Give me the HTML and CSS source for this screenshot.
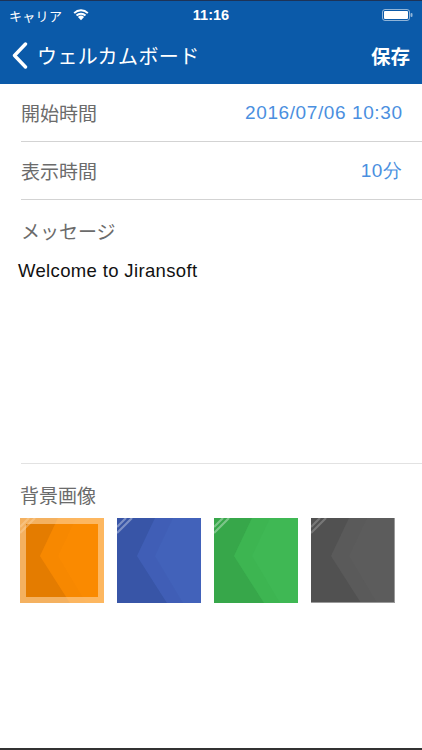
FILE: index.html
```html
<!DOCTYPE html>
<html lang="ja">
<head>
<meta charset="utf-8">
<title>ウェルカムボード</title>
<link rel="stylesheet" href="styles.css">
</head>
<body>
<div class="screen">
  <header class="topbar">
    <div class="status">
      <div class="status-left">
        <span class="carrier">キャリア</span>
        <svg class="wifi" width="18" height="13" viewBox="0 0 17 12">
          <path d="M8.5 11.5 L5.6 8.4 A4.2 4.2 0 0 1 11.4 8.4 Z" fill="#fff"/>
          <path d="M3.6 6.3 A7 7 0 0 1 13.4 6.3 L12.1 7.7 A5.2 5.2 0 0 0 4.9 7.7 Z" fill="#fff"/>
          <path d="M1.4 4 A10.2 10.2 0 0 1 15.6 4 L14.3 5.4 A8.3 8.3 0 0 0 2.7 5.4 Z" fill="#fff"/>
        </svg>
      </div>
      <div class="clock">11:16</div>
      <div class="status-right">
        <svg class="battery" width="32" height="12" viewBox="0 0 32 12">
          <rect x="0.5" y="0.5" width="27" height="11" rx="2.5" fill="none" stroke="#fff" stroke-opacity="0.55"/>
          <rect x="2" y="2" width="24" height="8" rx="1" fill="#fff"/>
          <rect x="28.5" y="4" width="2" height="4" rx="1" fill="#fff" fill-opacity="0.55"/>
        </svg>
      </div>
    </div>
    <nav class="navbar">
      <div class="back">
        <svg class="chevron" width="16" height="27" viewBox="0 0 16 27">
          <path d="M13.5 2 L2.5 13.5 L13.5 25" fill="none" stroke="#fff" stroke-width="3.4" stroke-linecap="round" stroke-linejoin="round"/>
        </svg>
        <span class="nav-title">ウェルカムボード</span>
      </div>
      <span class="save">保存</span>
    </nav>
  </header>

  <main class="content">
    <div class="row">
      <span class="label">開始時間</span>
      <span class="value">2016/07/06 10:30</span>
    </div>
    <div class="row">
      <span class="label">表示時間</span>
      <span class="value">10分</span>
    </div>
    <section class="message">
      <div class="label">メッセージ</div>
      <div class="message-text">Welcome to Jiransoft</div>
    </section>
    <section class="bg">
      <div class="label">背景画像</div>
      <div class="tiles">
        <div class="tile selected">
          <svg viewBox="0 0 84 85" preserveAspectRatio="none">
            <rect width="84" height="85" fill="#fa8a00"/>
            <polygon points="0,0 38,0 20,38 50,85 0,85" fill="#e47c00"/>
            <polygon points="38,0 56,0 38,38 66,85 50,85 20,38" fill="#f28500" opacity="0.35"/>
            <path d="M0 9 L9 0 M0 15 L15 0" stroke="#fff" stroke-opacity="0.3" stroke-width="2.2"/>
          </svg>
        </div>
        <div class="tile">
          <svg viewBox="0 0 84 85" preserveAspectRatio="none">
            <rect width="84" height="85" fill="#4262ba"/>
            <polygon points="0,0 38,0 20,38 50,85 0,85" fill="#3855a7"/>
            <polygon points="38,0 56,0 38,38 66,85 50,85 20,38" fill="#3c5ab0" opacity="0.35"/>
            <path d="M0 9 L9 0 M0 15 L15 0" stroke="#fff" stroke-opacity="0.35" stroke-width="2.2"/>
          </svg>
        </div>
        <div class="tile">
          <svg viewBox="0 0 84 85" preserveAspectRatio="none">
            <rect width="84" height="85" fill="#3fb854"/>
            <polygon points="0,0 38,0 20,38 50,85 0,85" fill="#37a74a"/>
            <polygon points="38,0 56,0 38,38 66,85 50,85 20,38" fill="#3aaf4e" opacity="0.35"/>
            <path d="M0 9 L9 0 M0 15 L15 0" stroke="#fff" stroke-opacity="0.35" stroke-width="2.2"/>
          </svg>
        </div>
        <div class="tile gray">
          <svg viewBox="0 0 84 85" preserveAspectRatio="none">
            <rect width="84" height="85" fill="#5c5c5c"/>
            <polygon points="0,0 38,0 20,38 50,85 0,85" fill="#515151"/>
            <polygon points="38,0 56,0 38,38 66,85 50,85 20,38" fill="#575757" opacity="0.35"/>
            <path d="M0 9 L9 0 M0 15 L15 0" stroke="#fff" stroke-opacity="0.22" stroke-width="2.2"/>
          </svg>
        </div>
      </div>
    </section>
  </main>
</div>
</body>
</html>
```

FILE: styles.css
```css
* { box-sizing: border-box; }
html, body { margin: 0; padding: 0; background: #fff; }
body {
  font-family: "Noto Sans CJK JP", "Liberation Sans", sans-serif;
}
.screen {
  width: 422px;
  height: 750px;
  display: flex;
  flex-direction: column;
  border-bottom: 2px solid #333;
  overflow: hidden;
}
.topbar {
  background: #0b5aa9;
  border-top: 1px solid #1d3358;
  color: #fff;
}
.status {
  height: 28px;
  display: grid;
  grid-template-columns: 1fr auto 1fr;
  align-items: center;
  padding: 0 9px;
}
.status-left { display: flex; align-items: center; gap: 10px; }
.carrier { font-size: 13px; line-height: 1; letter-spacing: 0.3px; }
.wifi { display: block; margin-top: -1px; }
.clock {
  font-family: "Liberation Sans", sans-serif;
  font-weight: bold;
  font-size: 14.5px;
}
.status-right { display: flex; justify-content: flex-end; }
.battery { display: block; margin-right: -1px; }
.navbar {
  height: 55px;
  display: flex;
  align-items: center;
  justify-content: space-between;
  padding: 0 12px 2px 12px;
}
.back { display: flex; align-items: center; gap: 9px; }
.chevron { display: block; }
.nav-title { font-size: 20px; letter-spacing: 0.4px; }
.save { font-size: 19.5px; font-weight: bold; }

.content { flex: 1; display: flex; flex-direction: column; }
.row {
  height: 58px;
  margin-left: 21px;
  padding-right: 20px;
  border-bottom: 1px solid #d3d3d3;
  display: flex;
  align-items: center;
  justify-content: space-between;
}
.label {
  font-size: 19px;
  color: #6b6b6b;
  line-height: 1;
}
.value {
  font-family: "Liberation Sans", sans-serif;
  font-size: 19px;
  color: #4a8fe0;
  letter-spacing: 0.6px;
  margin-right: -0.6px;
}
.message {
  height: 264px;
  margin-left: 21px;
  border-bottom: 1px solid #e2e2e2;
  padding-top: 21px;
}
.message-text {
  margin-left: -3px;
  margin-top: 20px;
  font-family: "Liberation Sans", sans-serif;
  font-size: 18.5px;
  color: #111;
  letter-spacing: 0.35px;
}
.bg { padding: 21px 0 0 20px; }
.tiles {
  display: flex;
  gap: 13px;
  margin-top: 14px;
}
.tile {
  position: relative;
  width: 84px;
  height: 85px;
}
.tile svg { display: block; width: 100%; height: 100%; }
.tile.selected::after {
  content: "";
  position: absolute;
  inset: 0;
  border: 6px solid rgba(255, 214, 160, 0.6);
}
.tile.gray::after {
  content: "";
  position: absolute;
  inset: 0;
  border-right: 1px solid #9a9a9a;
  border-bottom: 1px solid #9a9a9a;
}
```
